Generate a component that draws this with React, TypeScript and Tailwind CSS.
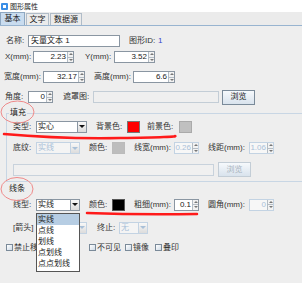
import React from 'react'

const font = "font-['Liberation_Sans','Noto_Sans_CJK_SC',sans-serif]"

function Spinner({ value, className = '', disabled = false }: { value: string; className?: string; disabled?: boolean }) {
  return (
    <div
      className={`flex h-[12px] border ${
        disabled ? 'border-[#c3d3e3] text-[#a9c0d8] bg-[#f7f7f7]' : 'border-[#8a96a2] text-[#222] bg-white'
      } ${className}`}
    >
      <div className="flex-1 flex items-center justify-end pr-[1px]">{value}</div>
      <div className="w-[6px] flex flex-col border-l border-[#b4bcc4]">
        <div className="flex-1 flex items-center justify-center border-b border-[#b4bcc4] bg-[#f2f2f2]">
          <span className="border-x-[2px] border-x-transparent border-b-[2px] border-b-[#777]" />
        </div>
        <div className="flex-1 flex items-center justify-center bg-[#f2f2f2]">
          <span className="border-x-[2px] border-x-transparent border-t-[2px] border-t-[#777]" />
        </div>
      </div>
    </div>
  )
}

function Combo({ value, className = '', disabled = false }: { value: string; className?: string; disabled?: boolean }) {
  return (
    <div
      className={`flex h-[12px] border ${
        disabled ? 'border-[#c3d3e3] text-[#a9c0d8] bg-[#f4f4f4]' : 'border-[#8a96a2] text-[#222] bg-white'
      } ${className}`}
    >
      <div className="flex-1 flex items-center pl-[1px]">{value}</div>
      <div
        className={`w-[9px] flex items-center justify-center border-l ${
          disabled ? 'border-[#c3d3e3]' : 'border-[#8a96a2]'
        } bg-gradient-to-b from-[#f8f8f8] to-[#dcdcdc]`}
      >
        <span
          className={`border-x-[3px] border-x-transparent border-t-[3px] ${
            disabled ? 'border-t-[#a9c0d8]' : 'border-t-[#111]'
          }`}
        />
      </div>
    </div>
  )
}

function BrowseButton({ disabled = false }: { disabled?: boolean }) {
  return (
    <div
      className={`w-[33px] h-[15px] flex items-center justify-center border ${
        disabled ? 'border-[#c3cdd6] text-[#a9b4be]' : 'border-[#7a8a99] text-[#222]'
      } bg-gradient-to-b from-[#f6f9fc] to-[#d9e3ed]`}
    >
      浏览
    </div>
  )
}

function Check({ label, className = '' }: { label: string; className?: string }) {
  return (
    <div className={`flex items-center ${className}`}>
      <span className="w-[7px] h-[7px] border border-[#7a8a99] bg-gradient-to-br from-white to-[#cfdbe7]" />
      <span className="ml-[1px]">{label}</span>
    </div>
  )
}

export default function App() {
  const lineTypes = ['实线', '点线', '划线', '点划线', '点点划线']

  return (
    <div className={`relative w-[302px] h-[283px] overflow-hidden bg-[#eeeeee] text-[8px] leading-none text-[#333] ${font}`}>
      {/* 标题栏 */}
      <div className="h-[12px] bg-white flex items-center">
        <svg width="7" height="7" viewBox="0 0 7 7" className="ml-[1px]">
          <rect x="0" y="0" width="7" height="7" rx="1" fill="#3a8ee6" />
          <rect x="2" y="2" width="3" height="3" fill="#ffffff" />
        </svg>
        <span className="ml-[2px] text-[7px] text-[#222]">图形属性</span>
      </div>

      {/* 选项卡 */}
      <div className="h-[14px] flex items-end border-b border-[#98b4d0] bg-[#ebebeb]">
        <div className="w-[25px] h-[13px] flex items-center justify-center border border-b-0 border-[#8ea8c2] bg-[#c9dcef] text-[#222]">
          基本
        </div>
        <div className="ml-[1px] w-[23px] h-[12px] flex items-center justify-center border border-b-0 border-[#b0bcc8] text-[#222]">
          文字
        </div>
        <div className="ml-[1px] w-[32px] h-[12px] flex items-center justify-center border border-b-0 border-[#b0bcc8] text-[#222]">
          数据源
        </div>
      </div>

      {/* 名称 */}
      <div className="mt-[9px] h-[12px] flex items-center pl-[6px]">
        <span className="w-[22px]">名称:</span>
        <div className="w-[92px] h-[12px] border border-[#8a96a2] bg-white flex items-center pl-[2px] text-[#222]">
          矢量文本 1
        </div>
        <span className="ml-[9px] w-[29px]">图形ID:</span>
        <span className="text-[#3344cc]">1</span>
      </div>

      {/* X / Y */}
      <div className="mt-[4px] h-[12px] flex items-center pl-[5px]">
        <span className="w-[28px]">X(mm):</span>
        <Spinner value="2.23" className="w-[41px]" />
        <span className="ml-[11px] w-[29px]">Y(mm):</span>
        <Spinner value="3.52" className="w-[41px]" />
      </div>

      {/* 宽度 / 高度 */}
      <div className="mt-[8px] h-[12px] flex items-center pl-[4px]">
        <span className="w-[39px]">宽度(mm):</span>
        <Spinner value="32.17" className="w-[42px]" />
        <span className="ml-[9px] w-[39px]">高度(mm):</span>
        <Spinner value="6.6" className="w-[42px]" />
      </div>

      {/* 角度 / 遮罩图 */}
      <div className="mt-[6px] h-[16px] flex items-center pl-[5px]">
        <span className="w-[23px]">角度:</span>
        <Spinner value="0" className="w-[25px]" />
        <span className="ml-[10px] w-[30px]">遮罩图:</span>
        <div className="w-[126px] h-[12px] border border-[#c3cdd6] bg-[#efefef]" />
        <div className="ml-[3px]">
          <BrowseButton />
        </div>
      </div>

      {/* 填充 */}
      <fieldset className="mt-[4px] ml-[6px] border-t border-l border-b border-[#c8d6e4]">
        <legend className="ml-[2px] px-[1px] text-[#222]">填充</legend>

        <div className="mt-[3px] h-[13px] flex items-center pl-[6px]">
          <span className="w-[23px]">类型:</span>
          <Combo value="实心" className="w-[51px]" />
          <span className="ml-[9px] w-[31px]">背景色:</span>
          <span className="w-[13px] h-[12px] border border-[#777] bg-[#ff0000]" />
          <span className="ml-[7px] w-[32px]">前景色:</span>
          <span className="w-[13px] h-[12px] border border-[#aaa] bg-[#c0c0c0]" />
        </div>

        <div className="mt-[9px] h-[12px] flex items-center pl-[6px]">
          <span className="w-[23px]">底纹:</span>
          <Combo value="实线" className="w-[44px]" disabled />
          <span className="ml-[9px] w-[23px]">颜色:</span>
          <span className="w-[13px] h-[12px] border border-[#bbb] bg-[#bdbdbd]" />
          <span className="ml-[9px] w-[40px]">线宽(mm):</span>
          <Spinner value="0.26" className="w-[25px]" disabled />
          <span className="ml-[9px] w-[41px]">线距(mm):</span>
          <Spinner value="1.06" className="w-[25px]" disabled />
        </div>

        <div className="mt-[8px] h-[15px] flex items-center pl-[6px]">
          <div className="w-[201px] h-[12px] border border-[#c8d2dc] bg-[#f0f0f0]" />
          <div className="ml-[4px]">
            <BrowseButton disabled />
          </div>
        </div>
        <div className="h-[4px]" />
      </fieldset>

      {/* 线条 */}
      <div className="mt-[3px] h-[8px] pl-[9px] flex items-center text-[#222]">线条</div>

      <div className="mt-[5px] h-[13px] flex items-center pl-[13px]">
        <span className="w-[23px]">线型:</span>
        <Combo value="实线" className="w-[44px]" />
        <span className="ml-[9px] w-[23px]">颜色:</span>
        <span className="w-[13px] h-[12px] border border-[#555] bg-black" />
        <span className="ml-[9px] w-[40px]">粗细(mm):</span>
        <Spinner value="0.1" className="w-[25px]" />
        <span className="ml-[9px] w-[41px]">圆角(mm):</span>
        <Spinner value="0" className="w-[25px]" disabled />
      </div>

      <div className="mt-[10px] h-[13px] flex items-center pl-[13px]">
        <span className="w-[30px]">[箭头]</span>
        <span className="w-[22px]">起始:</span>
        <Combo value="无" className="w-[22px]" disabled />
        <span className="ml-[10px] w-[22px]">终止:</span>
        <Combo value="无" className="w-[29px]" disabled />
      </div>

      <div className="mt-[9px] h-[9px] flex items-center pl-[6px]">
        <Check label="禁止移动" />
        <Check label="阴影" className="ml-[9px]" />
        <Check label="不可见" className="ml-[10px]" />
        <Check label="镜像" className="ml-[4px]" />
        <Check label="叠印" className="ml-[6px]" />
      </div>

      {/* 线型下拉列表 */}
      <div className="absolute left-[36px] top-[213px] w-[44px] h-[59px] border border-[#555] bg-white flex flex-col text-[#222]">
        {lineTypes.map((t, i) => (
          <div key={t} className={`h-[11px] flex items-center pl-[1px] ${i === 0 ? 'bg-[#b6cde3]' : ''}`}>
            {t}
          </div>
        ))}
      </div>

      {/* 标注 */}
      <svg className="absolute left-0 top-0 pointer-events-none" width="302" height="283" viewBox="0 0 302 283">
        <ellipse cx="17.5" cy="112" rx="16.5" ry="11" fill="none" stroke="#ee8a8a" strokeWidth="1" />
        <ellipse cx="17" cy="189" rx="16" ry="11.5" fill="none" stroke="#ee8a8a" strokeWidth="1" />
        <path d="M4 134 Q 60 139 120 138 T 175 136" fill="none" stroke="#ff1a1a" strokeWidth="2.5" strokeLinecap="round" />
        <path d="M87 213 Q 140 215 197 214" fill="none" stroke="#ff1a1a" strokeWidth="2.5" strokeLinecap="round" />
      </svg>
    </div>
  )
}
